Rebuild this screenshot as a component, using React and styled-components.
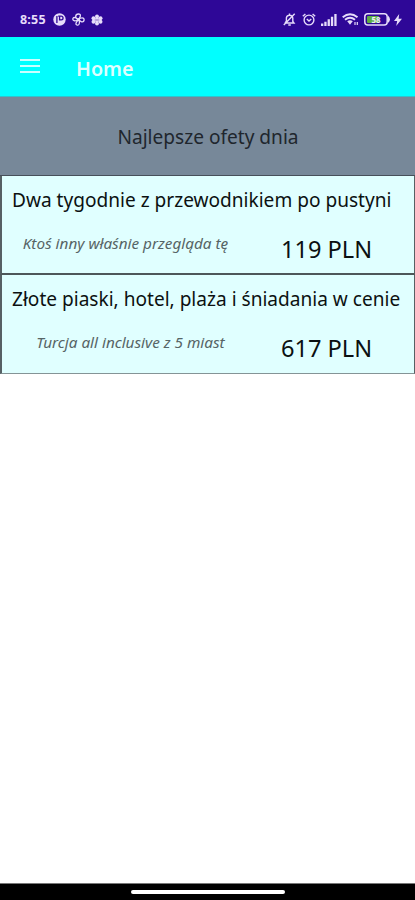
import React from "react";
import styled, { createGlobalStyle } from "styled-components";

const GlobalStyle = createGlobalStyle`
  * { box-sizing: border-box; }
  body { margin: 0; background: #fff; font-family: "Noto Sans", "Open Sans", sans-serif; }
`;

const Screen = styled.div`
  display: flex;
  flex-direction: column;
  width: 415px;
  height: 900px;
  overflow: hidden;
  background: #fff;
`;

const StatusBar = styled.header`
  display: flex;
  justify-content: space-between;
  height: 37px;
  padding: 2px 13px 0 20px;
  background: #2e0797;
  color: #e6dcfa;
`;

const Clock = styled.span`
  width: 27px;
  padding-top: 1px;
  font: 700 12.5px/1 "Noto Sans", sans-serif;
  letter-spacing: 0.2px;
  white-space: nowrap;
`;

const StatusGroup = styled.div`
  display: flex;
  align-items: center;
  gap: ${(p) => p.$gap}px;
`;

const Icon = styled.svg`
  display: block;
  flex: none;
  overflow: visible;
`;

const AppBar = styled.nav`
  display: flex;
  align-items: center;
  height: 60px;
  padding-left: 20px;
  background: #00ffff;
  border-bottom: 1px solid #2fc3cc;
`;

const MenuButton = styled.button`
  display: flex;
  flex-direction: column;
  gap: 4px;
  width: 20px;
  margin: 0 36px 1px 0;
  padding: 0;
  border: 0;
  background: none;
`;

const MenuLine = styled.span`
  align-self: stretch;
  height: 2px;
  background: #c9ffff;
`;

const PageTitle = styled.h1`
  margin: 3px 0 0;
  color: #dcffff;
  font-size: 19.7px;
  font-weight: 600;
  line-height: 27px;
`;

const Banner = styled.section`
  display: flex;
  align-items: center;
  justify-content: center;
  height: 78px;
  padding: 2px 0 0 1px;
  background: #778899;
  color: #20262d;
  font-size: 19.1px;
`;

const OfferList = styled.main`
  display: flex;
  flex-direction: column;
  border-top: 1px solid #47505a;
`;

const Offer = styled.article`
  height: 99px;
  padding: 9px 0 0 10px;
  background: #e0ffff;
  border: solid #566064;
  border-width: 0 1px ${(p) => (p.$last ? 1 : 2)}px 2px;
  border-bottom-color: ${(p) => (p.$last ? "#849496" : "#4d5759")};
`;

const OfferTitle = styled.h2`
  margin: 0;
  color: #0c1111;
  font-size: 19.08px;
  font-weight: 400;
  line-height: 30px;
  white-space: nowrap;
`;

const OfferDetails = styled.div`
  display: grid;
  grid-template-columns: 227px 175px;
  margin-top: 15px;
  align-items: start;
`;

const Teaser = styled.p`
  margin: 2px 0 0;
  padding-left: ${(p) => p.$indent}px;
  color: #566465;
  font-size: 15.3px;
  font-style: italic;
  font-weight: 400;
  line-height: 23px;
  text-align: center;
  white-space: nowrap;
`;

const Price = styled.p`
  margin: 2px 0 0;
  color: #0b1011;
  font-size: 23.6px;
  line-height: 34px;
  text-align: center;
`;

const BottomBar = styled.footer`
  display: flex;
  justify-content: center;
  align-items: center;
  height: 17px;
  margin-top: auto;
  background: #000;
  border-top: 1px solid #777;
`;

const HomeHandle = styled.span`
  width: 154px;
  height: 4px;
  border-radius: 2px;
  background: #fff;
`;

const offers = [
  { title: "Dwa tygodnie z przewodnikiem po pustyni", teaser: "Ktoś inny właśnie przegląda tę", price: "119 PLN", indent: 0 },
  { title: "Złote piaski, hotel, plaża i śniadania w cenie", teaser: "Turcja all inclusive z 5 miast", price: "617 PLN", indent: 10 },
];

const ParkingIcon = () => (
  <Icon width="13" height="13" viewBox="0 0 13 13">
    <circle cx="6.5" cy="6.5" r="6.2" fill="currentColor" />
    <path d="M6.6 3V6.9H8.2A1.8 1.8 0 0 0 8.2 3.2H5.2M3.9 3V10" fill="none" stroke="#2e0797" strokeWidth="1.3" />
  </Icon>
);

const FanIcon = () => (
  <Icon width="13" height="13" viewBox="0 0 13 13" fill="none" stroke="currentColor" strokeWidth="1.3">
    <path d="M6.5 6.5C2.5 5.5 3 1 6.5 1C9.5 1 8.5 4 6.5 6.5C10.5 3.5 13 5.5 11.8 8C10.3 10 8 8 6.5 6.5C8.5 10 7 12.8 4.8 12C2.5 11 5 8.5 6.5 6.5C3 9 0 7.5 1 5.3C2 3.5 4.5 5 6.5 6.5" />
    <circle cx="6.5" cy="6.5" r=".9" />
  </Icon>
);

const FlowerIcon = () => (
  <Icon width="12" height="12" viewBox="0 0 12 12" fill="currentColor">
    <circle cx="6" cy="2.4" r="2" />
    <circle cx="6" cy="9.6" r="2" />
    <circle cx="2.5" cy="4.2" r="2" />
    <circle cx="9.5" cy="4.2" r="2" />
    <circle cx="2.5" cy="7.8" r="2" />
    <circle cx="9.5" cy="7.8" r="2" />
    <circle cx="6" cy="6" r="2.4" />
    <path d="M4 5L8 7M8 5L4 7" stroke="#8c72c6" strokeWidth=".6" />
  </Icon>
);

const MutedBellIcon = () => (
  <Icon width="13" height="13" viewBox="0 0 13 13" fill="none" stroke="currentColor" strokeWidth="1.4">
    <path d="M2 10H11L9.8 8.4V5A3.3 3.3 0 0 0 3.4 4.6V8.2L2 10M5.3 12H7.8M11.7 .8L.8 12M6.5 .5V2" />
  </Icon>
);

const AlarmIcon = () => (
  <Icon width="14" height="13" viewBox="0 0 14 13" fill="none" stroke="currentColor" strokeWidth="1.4">
    <circle cx="7" cy="7" r="4.9" />
    <path d="M.8 3.3L3.4 1M10.6 1L13.2 3.3M4.8 6L7 8L9.3 6" />
  </Icon>
);

const SignalIcon = () => (
  <Icon width="16" height="12" viewBox="0 0 16 12" fill="currentColor">
    <path d="M0 9.5H2.3V12H0ZM3.3 7.7H5.6V12H3.3ZM6.6 5.3H8.9V12H6.6ZM9.9 2.8H12.2V12H9.9ZM13.3 0H15.6V12H13.3Z" />
  </Icon>
);

const WifiIcon = () => (
  <Icon width="17" height="13" viewBox="0 0 17 13" fill="none" stroke="currentColor">
    <path d="M.7 4.2Q8 -1.8 15.5 4.2" strokeWidth="1.9" />
    <path d="M3 6.8Q8 2.7 13 6.8" strokeWidth="1.9" />
    <path d="M5.2 8.3Q8 6.3 10.8 8.3L8 11.7Z" fill="currentColor" stroke="none" />
    <path d="M13 9V12M15.3 12V9" strokeWidth="1.2" />
  </Icon>
);

const BatteryIcon = () => (
  <Icon width="27" height="13" viewBox="0 0 27 13">
    <rect x=".8" y=".8" width="22.4" height="11.2" rx="3" fill="none" stroke="currentColor" strokeWidth="1.5" />
    <rect x="3" y="3" width="12" height="7" rx="1" fill="#5cac43" />
    <path d="M24 2.5Q28 6.5 24 10Z" fill="currentColor" />
    <text x="7.5" y="9.5" fill="#f1eef8" fontSize="8" fontWeight="700" fontFamily="Noto Sans">58</text>
  </Icon>
);

const BoltIcon = () => (
  <Icon width="8" height="12" viewBox="0 0 8 12" fill="currentColor">
    <path d="M5.2 0L0 7H3.2L2.2 12L8 4.8H4.6Z" />
  </Icon>
);

export default function App() {
  return (
    <>
      <GlobalStyle />
      <Screen>
        <StatusBar>
          <StatusGroup $gap={6}>
            <Clock>8:55</Clock>
            <StatusGroup $gap={6}>
              <ParkingIcon />
              <FanIcon />
              <FlowerIcon />
            </StatusGroup>
          </StatusGroup>
          <StatusGroup $gap={5}>
            <StatusGroup $gap={6}>
              <MutedBellIcon />
              <AlarmIcon />
            </StatusGroup>
            <SignalIcon />
            <WifiIcon />
            <StatusGroup $gap={3}>
              <BatteryIcon />
              <BoltIcon />
            </StatusGroup>
          </StatusGroup>
        </StatusBar>
        <AppBar>
          <MenuButton aria-label="Menu">
            <MenuLine />
            <MenuLine />
            <MenuLine />
          </MenuButton>
          <PageTitle>Home</PageTitle>
        </AppBar>
        <Banner>Najlepsze ofety dnia</Banner>
        <OfferList>
          {offers.map((offer, i) => (
            <Offer key={offer.title} $last={i === offers.length - 1}>
              <OfferTitle>{offer.title}</OfferTitle>
              <OfferDetails>
                <Teaser $indent={offer.indent}>{offer.teaser}</Teaser>
                <Price>{offer.price}</Price>
              </OfferDetails>
            </Offer>
          ))}
        </OfferList>
        <BottomBar>
          <HomeHandle />
        </BottomBar>
      </Screen>
    </>
  );
}
